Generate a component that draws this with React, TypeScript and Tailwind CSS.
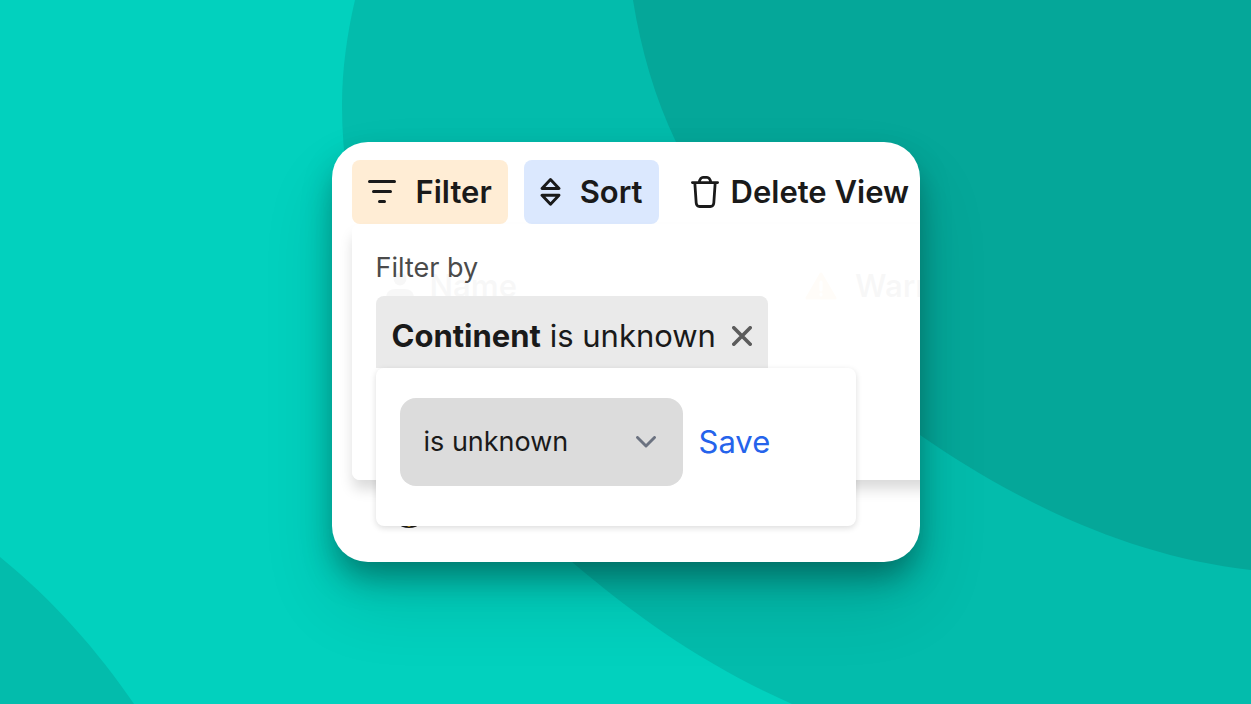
import React, { useState } from 'react';

const FilterIcon = () => (
  <svg viewBox="0 0 28 28" className="h-7 w-7 shrink-0" fill="none" stroke="currentColor" strokeWidth="3" strokeLinecap="round" aria-hidden="true">
    <path d="M1.5 3.5h25M5.5 13.5h17M11.5 23.5h5" />
  </svg>
);

const SortIcon = () => (
  <svg viewBox="0 0 22 28" className="h-7 w-[22px] shrink-0" fill="none" stroke="currentColor" strokeWidth="2.9" strokeLinecap="round" strokeLinejoin="round" aria-hidden="true">
    <path d="M10.5 1.6 19 10.5H2L10.5 1.6ZM10.5 26.2 2 17.3h17l-8.5 8.900Z" />
  </svg>
);

const TrashIcon = () => (
  <svg viewBox="0 0 28 32" className="h-8 w-7 shrink-0" fill="none" stroke="currentColor" strokeWidth="2.8" strokeLinecap="round" strokeLinejoin="round" aria-hidden="true">
    <path d="M1.4 6.6h25.2M8 6.4c.8-3 2-5 4-5h4c2 0 3.2 2 4 5M3.8 6.6 5.2 27c.2 2.3 1.4 3.5 3.5 3.5h10.6c2.1 0 3.3-1.2 3.5-3.5l1.4-20.4" />
  </svg>
);

const CloseIcon = () => (
  <svg viewBox="0 0 20 20" className="h-5 w-5 shrink-0" fill="none" stroke="currentColor" strokeWidth="3.6" strokeLinecap="round" aria-hidden="true">
    <path d="m1.8 1.8 16.4 16.4M18.2 1.8 1.8 18.2" />
  </svg>
);

const PersonIcon = () => (
  <svg viewBox="0 0 28 28" className="h-7 w-7 shrink-0" fill="currentColor" aria-hidden="true">
    <circle cx="14" cy="7" r="6.5" />
    <path d="M0 28v-2c0-6 4-9 9-9h10c5 0 9 3 9 9v2Z" />
  </svg>
);

const WarningIcon = () => (
  <svg viewBox="0 0 32 28" className="h-7 w-8 shrink-0" aria-hidden="true">
    <path d="M16 2 30 26H2Z" fill="#fb9a24" stroke="#fb9a24" strokeWidth="3" strokeLinejoin="round" />
    <path d="M16 10v8M16 22v1" stroke="white" strokeWidth="3" strokeLinecap="round" />
  </svg>
);

const RowIcon = () => (
  <svg viewBox="0 0 36 36" className="h-9 w-9" aria-hidden="true">
    <circle cx="18" cy="18" r="18" fill="#1a1a1a" />
    <circle cx="18" cy="33" r="2" fill="#d9a520" />
  </svg>
);

const Backdrop = () => (
  <svg viewBox="0 0 1251 704" preserveAspectRatio="xMidYMid slice" className="absolute inset-0 h-full w-full" aria-hidden="true">
    <path fill="#03bcac" d="M355 0C347 34 342 70 342 105C342 280 430 440 572 562C640 620 710 668 792 704H1251V0Z" />
    <path fill="#05a799" d="M633 0C641 50 655 98 676 142C722 260 813 368 920 435C1017 502 1128 556 1251 570V0Z" />
    <path fill="#03bcac" d="M0 557C53 600 97 650 134 704H0Z" />
  </svg>
);

const ViewTable = () => (
  <table className="w-[760px] table-fixed text-left text-[31px] leading-10">
    <thead>
      <tr className="h-[88px]">
        <th className="w-[437px] border-r border-neutral-200 pl-[54px] font-semibold">
          <span className="flex items-center gap-4"><PersonIcon />Name</span>
        </th>
        <th className="pl-9 font-semibold">
          <span className="flex items-center gap-[18px]"><WarningIcon />Warnings</span>
        </th>
      </tr>
    </thead>
    <tbody>
      <tr className="h-[360px]">
        <td className="pl-[59px]"><RowIcon /></td>
        <td />
      </tr>
    </tbody>
  </table>
);

const FilterPanel = () => {
  const [operator, setOperator] = useState('is unknown');

  return (
    <section className="absolute left-5 top-0 w-[720px] rounded-lg bg-white/97 px-6 pt-6 pb-28 shadow-[0_10px_14px_-1px_rgba(0,0,0,0.15)]">
      <h2 className="text-[27px] leading-10 text-[#4b4b4b]">Filter by</h2>
      <div className="relative mt-2 w-fit">
        <div className="flex h-[72px] items-center gap-4 rounded-t-lg bg-[#eaeaea] px-4 pt-2 text-[31px] leading-10">
          <p className="whitespace-nowrap"><strong className="font-bold">Continent</strong> is unknown</p>
          <button type="button" aria-label="Remove filter" className="text-[#5c5c5c]"><CloseIcon /></button>
        </div>
        <form
          onSubmit={(e) => e.preventDefault()}
          className="absolute left-0 top-full flex w-[480px] items-center gap-4 rounded-lg bg-white px-6 pt-[30px] pb-10 shadow-[0_2px_6px_rgba(0,0,0,0.14)]"
        >
          <div className="relative">
            <select
              aria-label="Condition"
              value={operator}
              onChange={(e) => setOperator(e.target.value)}
              className="h-[88px] w-[283px] appearance-none rounded-2xl bg-[#dcdcdc] px-6 text-[27px]"
            >
              <option>is unknown</option>
              <option>is known</option>
            </select>
            <svg viewBox="0 0 20 12" className="pointer-events-none absolute right-[27px] top-[38px] h-3 w-5" fill="none" stroke="#6b7280" strokeWidth="2.9" strokeLinecap="round" strokeLinejoin="round" aria-hidden="true">
              <path d="m1.5 1.5 8.5 8.5 8.5-8.5" />
            </svg>
          </div>
          <button type="submit" className="text-[31px] leading-10 text-[#2563eb]">Save</button>
        </form>
      </div>
    </section>
  );
};

export default function App() {
  return (
    <main className="relative flex min-h-screen items-center justify-center overflow-hidden bg-[#02d1be] font-['Inter','Liberation_Sans',sans-serif] text-[#1a1a1a]">
      <Backdrop />
      <div className="relative h-[420px] w-[588px] overflow-hidden rounded-[36px] bg-white shadow-[0_40px_72px_rgba(0,0,0,0.12),0_18px_32px_-4px_rgba(0,0,0,0.36)]">
        <div className="flex items-center gap-4 px-5 pt-[18px] text-[31px] font-semibold">
          <button type="button" className="flex h-16 shrink-0 items-center gap-5 rounded-lg bg-[#ffedd5] px-4"><FilterIcon />Filter</button>
          <button type="button" className="flex h-16 shrink-0 items-center gap-[18px] rounded-lg bg-[#dbe8fe] px-4"><SortIcon />Sort</button>
          <button type="button" className="flex h-16 shrink-0 items-center gap-3 whitespace-nowrap px-4"><TrashIcon />Delete View</button>
        </div>
        <div className="relative pt-[18px]">
          <ViewTable />
          <FilterPanel />
        </div>
      </div>
    </main>
  );
}
